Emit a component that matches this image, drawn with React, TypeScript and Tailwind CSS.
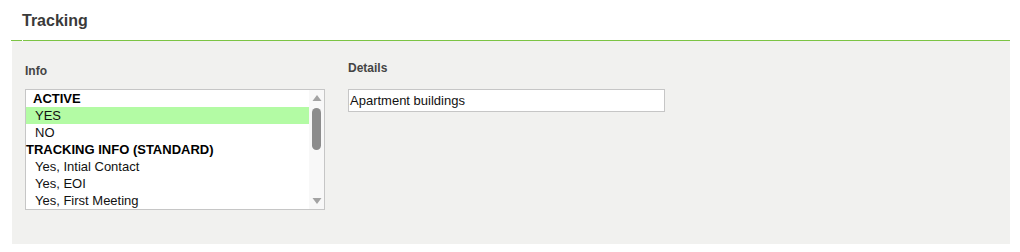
import React from "react";

const rows: { label: string; group?: boolean; pl: string; selected?: boolean }[] = [
  { label: "ACTIVE", group: true, pl: "pl-[7px]" },
  { label: "YES", pl: "pl-[9px]", selected: true },
  { label: "NO", pl: "pl-[9px]" },
  { label: "TRACKING INFO (STANDARD)", group: true, pl: "pl-0" },
  { label: "Yes, Intial Contact", pl: "pl-[9px]" },
  { label: "Yes, EOI", pl: "pl-[9px]" },
  { label: "Yes, First Meeting", pl: "pl-[9px]" },
];

export default function App() {
  return (
    <div
      className="w-[1020px] h-[252px] bg-white relative overflow-hidden"
      style={{ fontFamily: '"Liberation Sans", Arial, sans-serif' }}
    >
      <div className="h-[40px] pl-[22px] pt-[12px]">
        <h1 className="text-[16px] leading-[18px] font-bold text-[#3a3a3a]">Tracking</h1>
      </div>
      <div className="flex ml-[11px] w-[999px] h-[1px]">
        <div className="w-[11px] h-[1px] bg-[#7cc444]" />
        <div className="w-[1px] h-[1px] bg-white" />
        <div className="flex-1 h-[1px] bg-[#7cc444]" />
      </div>
      <div className="ml-[12px] w-[998px] h-[203px] bg-[#f1f1ef] flex">
        <div className="ml-[13px] w-[300px] pt-[23px]">
          <div className="text-[12px] leading-[14px] font-bold text-[#444]">Info</div>
          <div className="mt-[11px] h-[121px] border border-[#c6c6c6] bg-white flex">
            <div className="flex-1 flex flex-col">
              {rows.map((r) => (
                <div
                  key={r.label}
                  className={`h-[17px] leading-[17px] text-[13px] whitespace-nowrap ${r.pl} ${
                    r.group ? "font-bold text-black" : "text-[#111]"
                  } ${r.selected ? "bg-[#b3fba4]" : ""}`}
                >
                  {r.label}
                </div>
              ))}
            </div>
            <div className="w-[15px] bg-[#f8f8f8] flex flex-col items-center">
              <svg width="10" height="8" viewBox="0 0 10 8" className="mt-[4px]">
                <polygon points="5,1 9.5,7 0.5,7" fill="#a3a3a3" />
              </svg>
              <div className="mt-[6px] w-[9px] h-[42px] rounded-[5px] bg-[#8c8c8c]" />
              <div className="flex-1" />
              <svg width="10" height="8" viewBox="0 0 10 8" className="mb-[4px]">
                <polygon points="0.5,1 9.5,1 5,7" fill="#a3a3a3" />
              </svg>
            </div>
          </div>
        </div>
        <div className="ml-[23px] w-[317px] pt-[20px]">
          <div className="text-[12px] leading-[14px] font-bold text-[#444]">Details</div>
          <div className="mt-[14px] h-[23px] border border-[#c6c6c6] bg-white pl-[1px] text-[13px] leading-[21px] text-[#111]">
            Apartment buildings
          </div>
        </div>
      </div>
    </div>
  );
}
